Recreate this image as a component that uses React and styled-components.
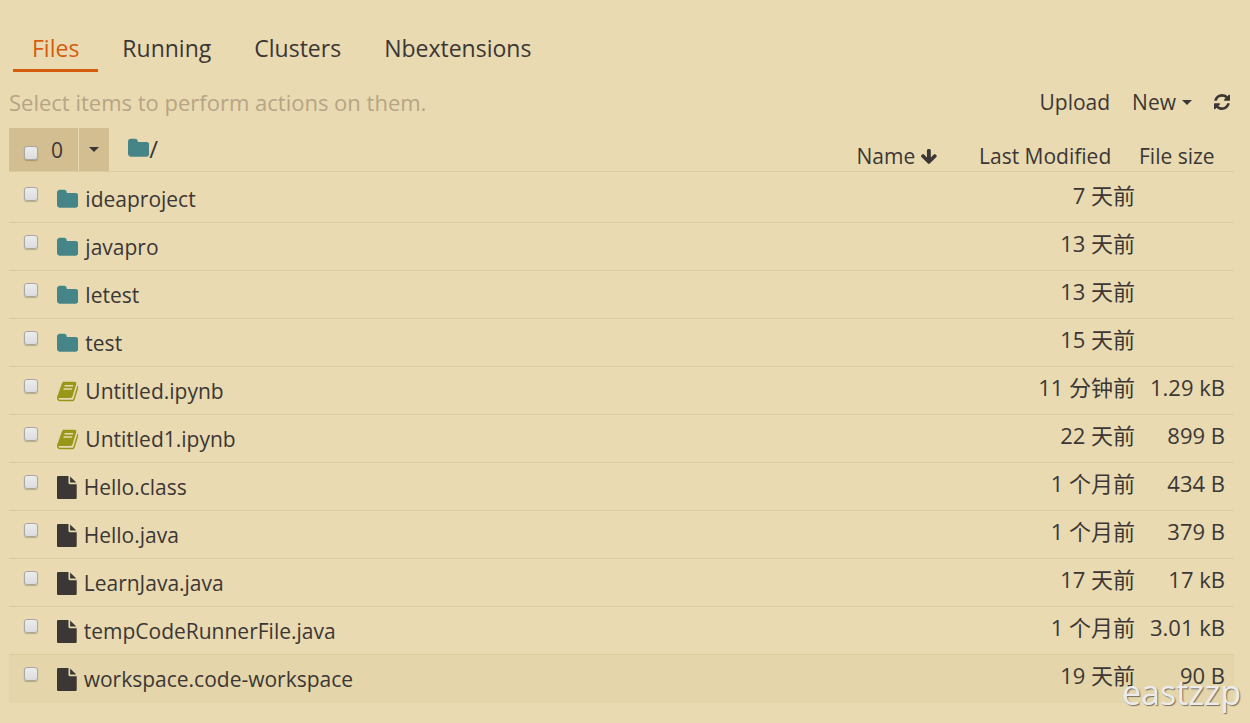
import React, { useState } from 'react';
import styled, { createGlobalStyle, css } from 'styled-components';

const GlobalStyle = createGlobalStyle`
    :root {
        --bg: #e9dab2;
        --bg-active: #e4d5aa;
        --line: #dbcb9d;
        --button: #d2be90;
        --font-color: #3b3735;
        --muted: #b6a585;
        --accent: #d65d0e;
        --folder: #458588;
        --notebook: #98971a;
    }

    * {
        box-sizing: border-box;
    }

    body {
        margin: 0;
        min-height: 100vh;
        background: var(--bg);
        color: var(--font-color);
        font-family: 'Open Sans', 'Noto Sans CJK SC', sans-serif;
        font-size: 21px;
    }

    a {
        color: inherit;
        text-decoration: none;
    }

    button {
        padding: 0;
        border: none;
        background: none;
        color: inherit;
        font: inherit;
        cursor: pointer;
    }
`;

const Page = styled.main`
    padding: 28px 16px 20px 9px;
`;

const Tabs = styled.nav`
    display: flex;
    gap: 5px;
    padding-left: 4px;
`;

const Tab = styled.a`
    padding: 0 19px;
    height: 44px;
    line-height: 40px;
    font-size: 23px;
    border-bottom: 3px solid transparent;

    ${({ $active }) =>
        $active &&
        css`
            color: var(--accent);
            border-bottom-color: var(--accent);
        `}
`;

const Toolbar = styled.div`
    display: flex;
    justify-content: space-between;
    align-items: center;
    height: 56px;
    padding: 4px 4px 0 0;

    p {
        margin: 0;
        color: var(--muted);
        font-size: 22px;
    }
`;

const Actions = styled.div`
    display: flex;
    align-items: center;
    gap: 22px;
`;

const MenuButton = styled.button`
    display: flex;
    align-items: center;
    gap: 6px;
`;

const Caret = styled.span`
    border-top: 5px solid currentColor;
    border-left: 5px solid transparent;
    border-right: 5px solid transparent;
`;

const Icon = styled.svg`
    display: block;
    flex: none;
    height: ${({ $size }) => $size || 23}px;
    fill: ${({ $color }) => $color || 'currentColor'};
`;

const Checkbox = styled.input.attrs({ type: 'checkbox' })`
    appearance: none;
    display: block;
    flex: none;
    width: 14px;
    height: 14px;
    margin: 0;
    border: 1px solid #aaa8a4;
    border-radius: 3px;
    background: linear-gradient(#ececec, #dcdcdc);
    box-shadow: 0 1px 1px rgba(90, 80, 50, 0.35);

    &:checked {
        background: var(--folder);
    }
`;

const FileTable = styled.table`
    width: 100%;
    table-layout: fixed;
    border-spacing: 0;

    th {
        height: 44px;
        padding: 0;
        border-bottom: 1px solid var(--line);
        font-weight: normal;
        text-align: left;
        vertical-align: top;
    }

    th:nth-child(2) {
        width: 160px;
    }

    th:nth-child(3) {
        width: 95px;
    }

    tbody::before {
        content: '';
        display: block;
        height: 3px;
    }
`;

const HeadTools = styled.div`
    display: flex;
    padding-right: 42px;
`;

const SelectAll = styled.label`
    display: flex;
    align-items: center;
    gap: 13px;
    width: 69px;
    height: 43px;
    padding-left: 15px;
    background: var(--button);

    input {
        margin-top: 6px;
    }
`;

const SelectMenu = styled.button`
    display: flex;
    align-items: center;
    justify-content: center;
    width: 30px;
    height: 43px;
    margin-left: 1px;
    background: var(--button);
`;

const Breadcrumb = styled.a`
    display: flex;
    align-items: center;
    height: 41px;
    margin-left: 19px;
    font-size: 24px;
`;

const SortButton = styled.button`
    display: flex;
    align-items: center;
    gap: 6px;
    height: 28px;
    margin-top: 14px;
    white-space: nowrap;

    ${HeadTools} & {
        margin-left: auto;
    }
`;

const Row = styled.tr`
    background: ${({ $active }) => ($active ? 'var(--bg-active)' : 'none')};

    td {
        height: 48px;
        padding: 0;
        border-bottom: 1px solid var(--line);
        white-space: nowrap;
    }

    &:last-child td {
        border-bottom-color: transparent;
    }
`;

const Item = styled.div`
    display: flex;
    align-items: flex-start;
    height: 47px;
    padding: 12px 0 0 15px;
`;

const ItemLink = styled.a`
    display: flex;
    align-items: center;
    gap: 7px;
    height: 24px;
    margin-left: 19px;
`;

const Cell = styled.td`
    text-align: right;
    font-size: 22px;
    line-height: 30px;

    && {
        padding: 0 ${({ $end }) => $end}px 8px 0;
    }
`;

const Watermark = styled.div`
    position: absolute;
    right: 9px;
    bottom: 9px;
    color: #ececec;
    font-size: 34px;
    line-height: 44px;
    text-shadow: 1px 1px 1px #77705f;
    pointer-events: none;
`;

const icons = {
    folder: {
        viewBox: '64 0 1664 1792',
        color: 'var(--folder)',
        d: 'M1728 608v704q0 92-66 158t-158 66h-1216q-92 0-158-66t-66-158v-960q0-92 66-158t158-66h320q92 0 158 66t66 158v32h672q92 0 158 66t66 158z',
    },
    notebook: {
        viewBox: '64 0 1664 1792',
        color: 'var(--notebook)',
        d: 'M1703 478q40 57 18 129l-275 906q-19 64-76.5 107.5t-122.5 43.5h-923q-77 0-148.5-53.5t-99.5-131.5q-24-67-2-127 0-4 3-27t4-37q1-8-3-21.5t-3-19.5q2-11 8-21t16.5-23.5 16.5-23.5q23-38 45-91.5t30-91.5q3-10 .5-30t-.5-28q3-11 17-28t17-23q21-36 42-92t25-90q1-9-2.5-32t.5-28q4-13 22-30.5t22-22.5q19-26 42.5-84.5t27.5-96.5q1-8-3-25.5t-2-26.5q2-8 9-18t18-23 17-21q8-12 16.5-30.5t15-35 16-36 19.5-32 26.5-23.5 36-11.5 47.5 5.5l-1 3q38-9 51-9h761q74 0 114 56t18 130l-274 906q-36 119-71.5 153.5t-128.5 34.5h-869q-27 0-38 15-11 16-1 43 24 70 144 70h923q29 0 56-15.5t35-41.5l300-987q7-22 5-57 38 15 59 43zm-1064 2q-4 13 2 22.5t20 9.5h608q13 0 25.5-9.5t16.5-22.5l21-64q4-13-2-22.5t-20-9.5h-608q-13 0-25.5 9.5t-16.5 22.5zm-83 256q-4 13 2 22.5t20 9.5h608q13 0 25.5-9.5t16.5-22.5l21-64q4-13-2-22.5t-20-9.5h-608q-13 0-25.5 9.5t-16.5 22.5z',
    },
    file: {
        viewBox: '128 0 1536 1792',
        d: 'M1152 512v-472q22 14 36 28l408 408q14 14 28 36h-472zm-128 32q0 40 28 68t68 28h544v1056q0 40-28 68t-68 28h-1344q-40 0-68-28t-28-68v-1600q0-40 28-68t68-28h800v544z',
    },
    refresh: {
        viewBox: '128 128 1536 1536',
        d: 'M1639 1056q0 5-1 7-64 268-268 434.5t-478 166.5q-146 0-282.5-55t-243.5-157l-129 129q-19 19-45 19t-45-19-19-45v-448q0-26 19-45t45-19h448q26 0 45 19t19 45-19 45l-137 137q71 66 161 102t187 36q134 0 250-65t186-179q11-17 53-117 8-23 30-23h192q13 0 22.5 9.5t9.5 22.5zm25-800v448q0 26-19 45t-45 19h-448q-26 0-45-19t-19-45 19-45l138-138q-148-137-349-137-134 0-250 65t-186 179q-11 17-53 117-8 23-30 23h-199q-13 0-22.5-9.5t-9.5-22.5v-7q65-268 270-434.5t480-166.5q146 0 284 55.5t245 156.5l130-129q19-19 45-19t45 19 19 45z',
    },
    arrowDown: {
        viewBox: '117 128 1558 1483',
        d: 'M1675 832q0 53-37 90l-651 652q-39 37-91 37-53 0-90-37l-651-652q-38-36-38-90 0-53 38-91l74-75q39-37 91-37 53 0 90 37l294 294v-704q0-52 38-90t90-38h128q52 0 90 38t38 90v704l294-294q37-37 90-37 52 0 91 37l75 75q37 39 37 91z',
    },
};

const Glyph = ({ name, size }) => (
    <Icon viewBox={icons[name].viewBox} $size={size} $color={icons[name].color} aria-hidden="true">
        <path d={icons[name].d} />
    </Icon>
);

const tabs = ['Files', 'Running', 'Clusters', 'Nbextensions'];

const files = [
    { type: 'folder', name: 'ideaproject', modified: '7 天前', size: '' },
    { type: 'folder', name: 'javapro', modified: '13 天前', size: '' },
    { type: 'folder', name: 'letest', modified: '13 天前', size: '' },
    { type: 'folder', name: 'test', modified: '15 天前', size: '' },
    { type: 'notebook', name: 'Untitled.ipynb', modified: '11 分钟前', size: '1.29 kB' },
    { type: 'notebook', name: 'Untitled1.ipynb', modified: '22 天前', size: '899 B' },
    { type: 'file', name: 'Hello.class', modified: '1 个月前', size: '434 B' },
    { type: 'file', name: 'Hello.java', modified: '1 个月前', size: '379 B' },
    { type: 'file', name: 'LearnJava.java', modified: '17 天前', size: '17 kB' },
    { type: 'file', name: 'tempCodeRunnerFile.java', modified: '1 个月前', size: '3.01 kB' },
    { type: 'file', name: 'workspace.code-workspace', modified: '19 天前', size: '90 B' },
];

export default function App() {
    const [selected, setSelected] = useState([]);
    const [hovered, setHovered] = useState('workspace.code-workspace');

    const toggle = (name) =>
        setSelected(selected.includes(name) ? selected.filter((n) => n !== name) : [...selected, name]);

    const toggleAll = () => setSelected(selected.length === files.length ? [] : files.map((f) => f.name));

    return (
        <>
            <GlobalStyle />
            <Page>
                <Tabs>
                    {tabs.map((tab) => (
                        <Tab key={tab} href={`#${tab.toLowerCase()}`} $active={tab === 'Files'}>
                            {tab}
                        </Tab>
                    ))}
                </Tabs>

                <Toolbar>
                    <p>Select items to perform actions on them.</p>
                    <Actions>
                        <button type="button">Upload</button>
                        <MenuButton type="button">
                            New <Caret />
                        </MenuButton>
                        <button type="button" aria-label="Refresh">
                            <Glyph name="refresh" size={16} />
                        </button>
                    </Actions>
                </Toolbar>

                <FileTable>
                    <thead>
                        <tr>
                            <th>
                                <HeadTools>
                                    <SelectAll>
                                        <Checkbox
                                            checked={selected.length === files.length}
                                            onChange={toggleAll}
                                        />
                                        {selected.length}
                                    </SelectAll>
                                    <SelectMenu type="button" aria-label="Select by type">
                                        <Caret />
                                    </SelectMenu>
                                    <Breadcrumb href="#files">
                                        <Glyph name="folder" />/
                                    </Breadcrumb>
                                    <SortButton type="button">
                                        Name <Glyph name="arrowDown" size={15} />
                                    </SortButton>
                                </HeadTools>
                            </th>
                            <th>
                                <SortButton type="button">Last Modified</SortButton>
                            </th>
                            <th>
                                <SortButton type="button">File size</SortButton>
                            </th>
                        </tr>
                    </thead>
                    <tbody>
                        {files.map((file) => (
                            <Row
                                key={file.name}
                                $active={hovered === file.name}
                                onMouseEnter={() => setHovered(file.name)}
                            >
                                <td>
                                    <Item>
                                        <Checkbox
                                            aria-label={file.name}
                                            checked={selected.includes(file.name)}
                                            onChange={() => toggle(file.name)}
                                        />
                                        <ItemLink href={`#${file.name}`}>
                                            <Glyph name={file.type} />
                                            {file.name}
                                        </ItemLink>
                                    </Item>
                                </td>
                                <Cell $end={4}>{file.modified}</Cell>
                                <Cell $end={9}>{file.size}</Cell>
                            </Row>
                        ))}
                    </tbody>
                </FileTable>
            </Page>
            <Watermark>eastzzp</Watermark>
        </>
    );
}
